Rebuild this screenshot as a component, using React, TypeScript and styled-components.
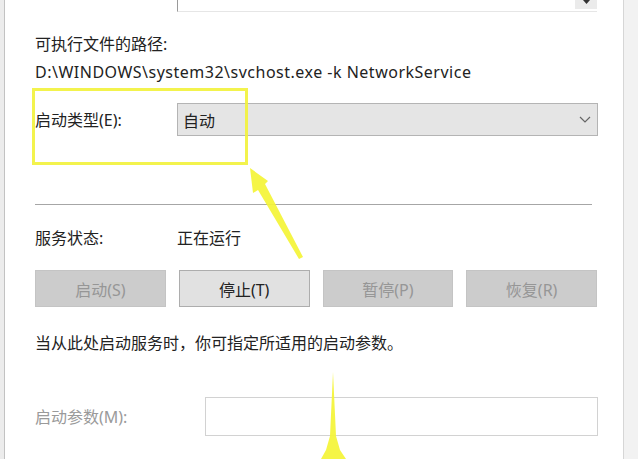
import React from "react";
import styled, { createGlobalStyle } from "styled-components";

const Global = createGlobalStyle`
  html, body { margin: 0; padding: 0; background: #ffffff; }
  body { font-family: "Noto Sans", "Noto Sans CJK SC", sans-serif; }
`;

const Page = styled.div`
  position: relative;
  width: 638px;
  height: 459px;
  overflow: hidden;
  background: #ffffff;
  display: flex;
  font-family: "Noto Sans", "Noto Sans CJK SC", sans-serif;
  font-size: 16px;
  color: #222222;
`;

const LeftEdge = styled.div`
  width: 4px;
  flex: none;
  background: #ececec;
  border-right: 1px solid #c2c2c2;
`;

const RightEdge = styled.div`
  width: 14px;
  flex: none;
  background: #f2f2f2;
  border-left: 1px solid #d6d6d6;
`;

const Content = styled.div`
  flex: 1;
  padding: 0 25px 0 30px;
  display: flex;
  flex-direction: column;
`;

const TopField = styled.div`
  height: 11px;
  margin-left: 142px;
  margin-right: 1px;
  border-left: 1px solid #9a9a9a;
  border-bottom: 1px solid #e6e6e6;
  display: flex;
  justify-content: flex-end;
  align-items: flex-start;
`;

const ScrollBtn = styled.div`
  width: 22px;
  height: 9px;
  background: #ebebeb;
  display: flex;
  justify-content: center;
  align-items: flex-start;
`;

const Text = styled.div<{ $mt: number; $spacing?: number }>`
  margin-top: ${(p) => p.$mt}px;
  line-height: 20px;
  height: 20px;
  white-space: nowrap;
  letter-spacing: ${(p) => p.$spacing ?? 0}px;
`;

const Row = styled.div<{ $mt: number; $label: number }>`
  margin-top: ${(p) => p.$mt}px;
  display: grid;
  grid-template-columns: ${(p) => p.$label}px 1fr;
  align-items: center;
`;

const Label = styled.div<{ $muted?: boolean }>`
  line-height: 20px;
  white-space: nowrap;
  color: ${(p) => (p.$muted ? "#9a9a9a" : "#222222")};
`;

const Combo = styled.div`
  height: 31px;
  background: #e5e5e5;
  border: 1px solid #b4b4b4;
  display: flex;
  align-items: center;
  justify-content: space-between;
  padding: 0 6px 0 5px;
`;

const Separator = styled.div`
  margin-top: 68px;
  margin-right: 6px;
  height: 1px;
  background: #a6a6a6;
`;

const Buttons = styled.div`
  margin-top: 22px;
  margin-right: 1px;
  display: grid;
  grid-template-columns: repeat(4, 1fr);
  column-gap: 13px;
`;

const Button = styled.div<{ $disabled?: boolean }>`
  height: 35px;
  display: flex;
  align-items: center;
  justify-content: center;
  background: ${(p) => (p.$disabled ? "#cccccc" : "#e1e1e1")};
  border: 1px solid ${(p) => (p.$disabled ? "#c4c4c4" : "#adadad")};
  color: ${(p) => (p.$disabled ? "#969696" : "#222222")};
`;

const Input = styled.div`
  height: 37px;
  background: #ffffff;
  border: 1px solid #d2d2d2;
`;

const Overlay = styled.svg`
  position: absolute;
  left: 0;
  top: 0;
  width: 638px;
  height: 459px;
  pointer-events: none;
`;

export default function App() {
  return (
    <Page>
      <Global />
      <LeftEdge />
      <Content>
        <TopField>
          <ScrollBtn>
            <svg width="9" height="5" viewBox="0 0 9 5">
              <path d="M1 0 L4.5 4 L8 0 Z" fill="#333" />
            </svg>
          </ScrollBtn>
        </TopField>
        <Text $mt={22}>可执行文件的路径:</Text>
        <Text $mt={8} $spacing={0.5}>D:\WINDOWS\system32\svchost.exe -k NetworkService</Text>
        <Row $mt={21} $label={142}>
          <Label>启动类型(E):</Label>
          <Combo>
            <span>自动</span>
            <svg width="12" height="7" viewBox="0 0 12 7">
              <path d="M1 1 L6 6 L11 1" fill="none" stroke="#666" strokeWidth="1.2" />
            </svg>
          </Combo>
        </Row>
        <Separator />
        <Row $mt={23} $label={142}>
          <Label>服务状态:</Label>
          <Label>正在运行</Label>
        </Row>
        <Buttons>
          <Button $disabled>启动(S)</Button>
          <Button>停止(T)</Button>
          <Button $disabled>暂停(P)</Button>
          <Button $disabled>恢复(R)</Button>
        </Buttons>
        <Text $mt={26}>当从此处启动服务时，你可指定所适用的启动参数。</Text>
        <Row $mt={44} $label={170}>
          <Label $muted>启动参数(M):</Label>
          <Input />
        </Row>
      </Content>
      <RightEdge />
      <Overlay viewBox="0 0 638 459">
        <rect x="33.5" y="89.5" width="213" height="74" fill="none" stroke="#f2f23a" strokeWidth="3" opacity="0.9" />
        <polygon
          points="250,168 268,181 265,184 303,257 299,259 258,190 253,193"
          fill="#f4f436"
          opacity="0.92"
        />
        <polygon
          points="333,372 336,436 340,450 346,459 321,459 326,450 330,436"
          fill="#f4f436"
          opacity="0.92"
        />
      </Overlay>
    </Page>
  );
}
